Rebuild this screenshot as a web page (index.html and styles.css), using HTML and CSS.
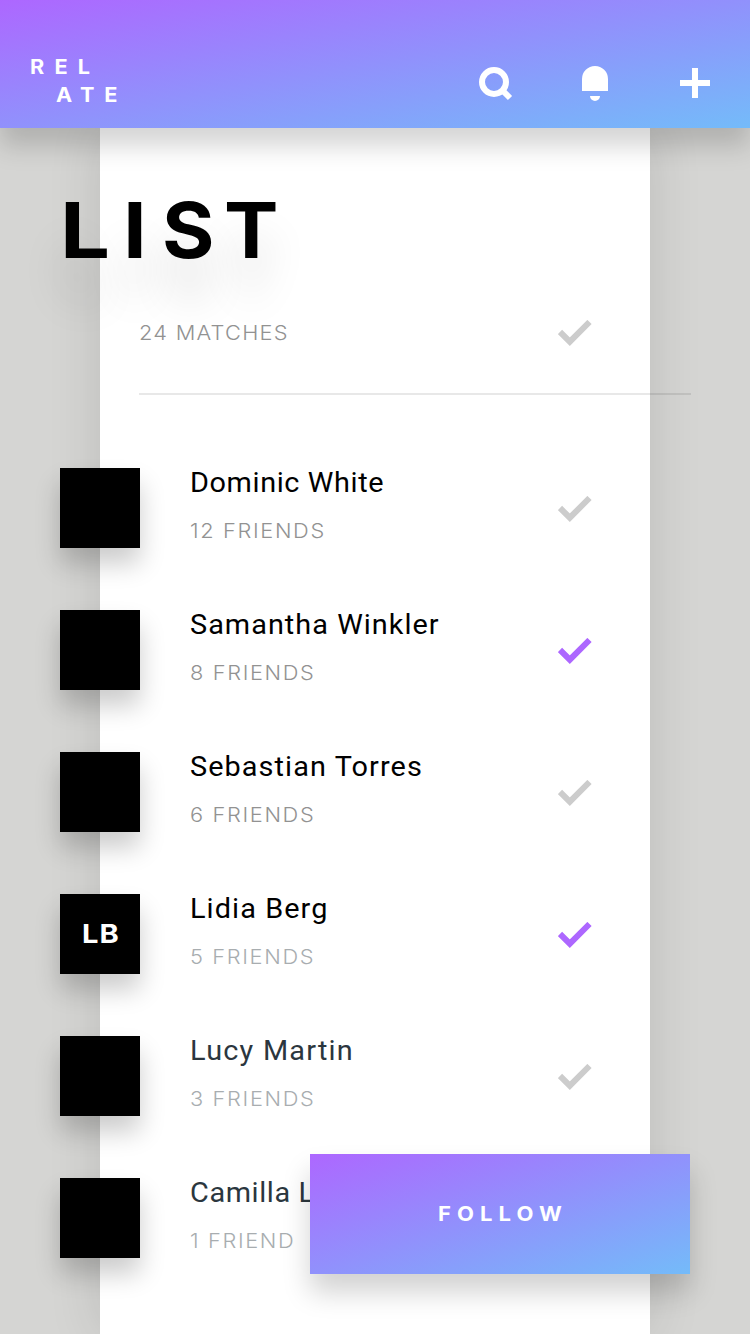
FILE: index.html
```html
<!DOCTYPE html>
<html lang="en">
<head>
<meta charset="utf-8">
<title>Relate – List</title>
<link rel="stylesheet" href="styles.css">
</head>
<body>
<svg class="defs" width="0" height="0"><symbol id="check" viewBox="0 0 34 26"><path d="M2 12 11.8 21.7 31.5 2" fill="none" stroke="currentColor" stroke-width="6"/></symbol></svg>
<div class="screen">
  <header class="topbar">
    <div class="logo"><span>REL</span><span class="logo-second">ATE</span></div>
    <nav class="actions">
      <svg class="search" width="34" height="34" viewBox="0 0 34 34"><circle cx="15" cy="15" r="12" fill="none" stroke="#fff" stroke-width="6"/><path d="M23 23l8 8" stroke="#fff" stroke-width="6"/></svg>
      <svg class="bell" width="26" height="35" viewBox="0 0 26 35"><path d="M0 25V13a13 13 0 0 1 26 0v12zM8 30h10a5 5 0 0 1-10 0z" fill="#fff"/></svg>
      <svg width="30" height="30" viewBox="0 0 30 30"><path d="M12 0h6v12h12v6H18v12h-6V18H0v-6h12z" fill="#fff"/></svg>
    </nav>
  </header>
  <main class="content">
    <h1 class="title"><span class="l">L</span><span class="i">I</span><span class="s">S</span><span class="t">T</span></h1>
    <div class="summary"><span class="meta matches">24 MATCHES</span><svg class="check"><use href="#check"/></svg></div>
    <ul class="people">
      <li class="person"><div class="avatar"></div><div class="info"><div class="name dominic">Dominic White</div><div class="meta">12 FRIENDS</div></div><svg class="check"><use href="#check"/></svg></li>
      <li class="person"><div class="avatar"></div><div class="info"><div class="name samantha">Samantha Winkler</div><div class="meta">8 FRIENDS</div></div><svg class="check on"><use href="#check"/></svg></li>
      <li class="person"><div class="avatar"></div><div class="info"><div class="name sebastian">Sebastian Torres</div><div class="meta">6 FRIENDS</div></div><svg class="check"><use href="#check"/></svg></li>
      <li class="person"><div class="avatar"><span class="initials">LB</span></div><div class="info"><div class="name lidia">Lidia Berg</div><div class="meta pale">5 FRIENDS</div></div><svg class="check on"><use href="#check"/></svg></li>
      <li class="person"><div class="avatar"></div><div class="info"><div class="name slate lucy">Lucy Martin</div><div class="meta pale">3 FRIENDS</div></div><svg class="check"><use href="#check"/></svg></li>
      <li class="person"><div class="avatar"></div><div class="info"><div class="name slate">Camilla L</div><div class="meta pale">1 FRIEND</div></div></li>
    </ul>
  </main>
  <button class="follow"><span class="follow-label">FOLLOW</span></button>
</div>
</body>
</html>
```
FILE: styles.css
```css
* { box-sizing: border-box; }
body { margin: 0; }
.defs { position: absolute; }
.screen {
  position: relative;
  width: 750px;
  height: 1334px;
  overflow: hidden;
  background: #d5d5d3;
  font-family: Inter, "Liberation Sans", sans-serif;
}
.topbar {
  position: relative;
  z-index: 2;
  height: 128px;
  display: flex;
  justify-content: space-between;
  padding: 53px 40px 0 30px;
  background: linear-gradient(to bottom right, #ad67ff, #74bbf9);
  box-shadow: 0 18px 24px rgba(0, 0, 0, .17);
}
.logo {
  display: flex;
  flex-direction: column;
  color: #fff;
  font: 700 19.5px/28px Inter, sans-serif;
  letter-spacing: 9.2px;
  transform: scaleX(1.11);
  transform-origin: left;
}
.logo-second { padding-left: 23.5px; letter-spacing: 8.8px; }
.actions { display: flex; align-items: center; gap: 70px; height: 60px; }
.search { margin: 2px -1px 0 0; }
.bell { margin-right: 2px; }
.content {
  position: relative;
  width: 550px;
  height: 1206px;
  margin-left: 100px;
  background: #fff;
  box-shadow: 0 0 50px rgba(0, 0, 0, .12);
}
.title {
  display: flex;
  height: 172px;
  margin: 0 0 0 -40px;
  padding-top: 55px;
  font: 700 77px/94px Inter, sans-serif;
  color: #000;
  text-shadow: 0 40px 40px rgba(0, 0, 0, .13);
}
.title span { width: 63px; transform-origin: left; }
.title .l { transform: scaleX(1.15); }
.title .i { width: 39px; transform: scaleX(1.1); }
.title .s { transform: scaleX(1.04); }
.title .t { margin-left: -1px; transform: scaleX(1.06); }
.summary {
  display: flex;
  align-items: center;
  justify-content: space-between;
  width: 552px;
  height: 95px;
  margin-left: 39px;
  padding: 0 99px 27px 0;
  border-bottom: 2px solid rgba(0, 0, 0, .09);
}
.meta {
  font: 300 20px/24px Inter, sans-serif;
  letter-spacing: 1.5px;
  color: #929292;
  white-space: nowrap;
  transform: scaleX(1.09);
  transform-origin: left;
}
.matches { letter-spacing: 1.15px; }
.pale { color: #a8adb0; }
.check { width: 34px; height: 26px; color: #ccc; flex: none; }
.on { color: #ad67ff; }
.people {
  list-style: none;
  margin: 73px 0 0 -40px;
  padding: 0;
  display: grid;
  gap: 62px;
}
.person {
  display: flex;
  align-items: center;
  width: 532px;
  height: 80px;
}
.person .check { margin-top: 2px; }
.avatar {
  display: flex;
  align-items: center;
  justify-content: center;
  width: 80px;
  height: 80px;
  padding-left: 2px;
  background: #000;
  color: #fff;
  font: 700 26px/30px Inter, sans-serif;
  letter-spacing: 1px;
  box-shadow: 0 16px 24px rgba(0, 0, 0, .2);
}
.initials { transform: scaleX(1.12); }
.info { flex: 1; margin-left: 50px; padding-bottom: 7px; }
.name {
  margin-bottom: 20px;
  font: 400 28px/32px Roboto, sans-serif;
  letter-spacing: .6px;
  color: #000;
  white-space: nowrap;
  transform: scaleX(1.03);
  transform-origin: left;
}
.samantha { letter-spacing: 1px; }
.sebastian { letter-spacing: 1.05px; }
.lidia { letter-spacing: 1.05px; }
.slate { color: #2b363e; }
.lucy { letter-spacing: 1.2px; }
.follow {
  position: absolute;
  z-index: 3;
  right: 60px;
  bottom: 60px;
  width: 380px;
  height: 120px;
  border: 0;
  padding: 0 0 0 6px;
  color: #fff;
  font: 700 20px/24px Inter, sans-serif;
  letter-spacing: 5.5px;
  background: linear-gradient(to bottom right, #ad67ff, #74bbf9);
  box-shadow: 0 18px 26px rgba(0, 0, 0, .18);
}
.follow-label { display: inline-block; transform: scaleX(1.1); }
```
